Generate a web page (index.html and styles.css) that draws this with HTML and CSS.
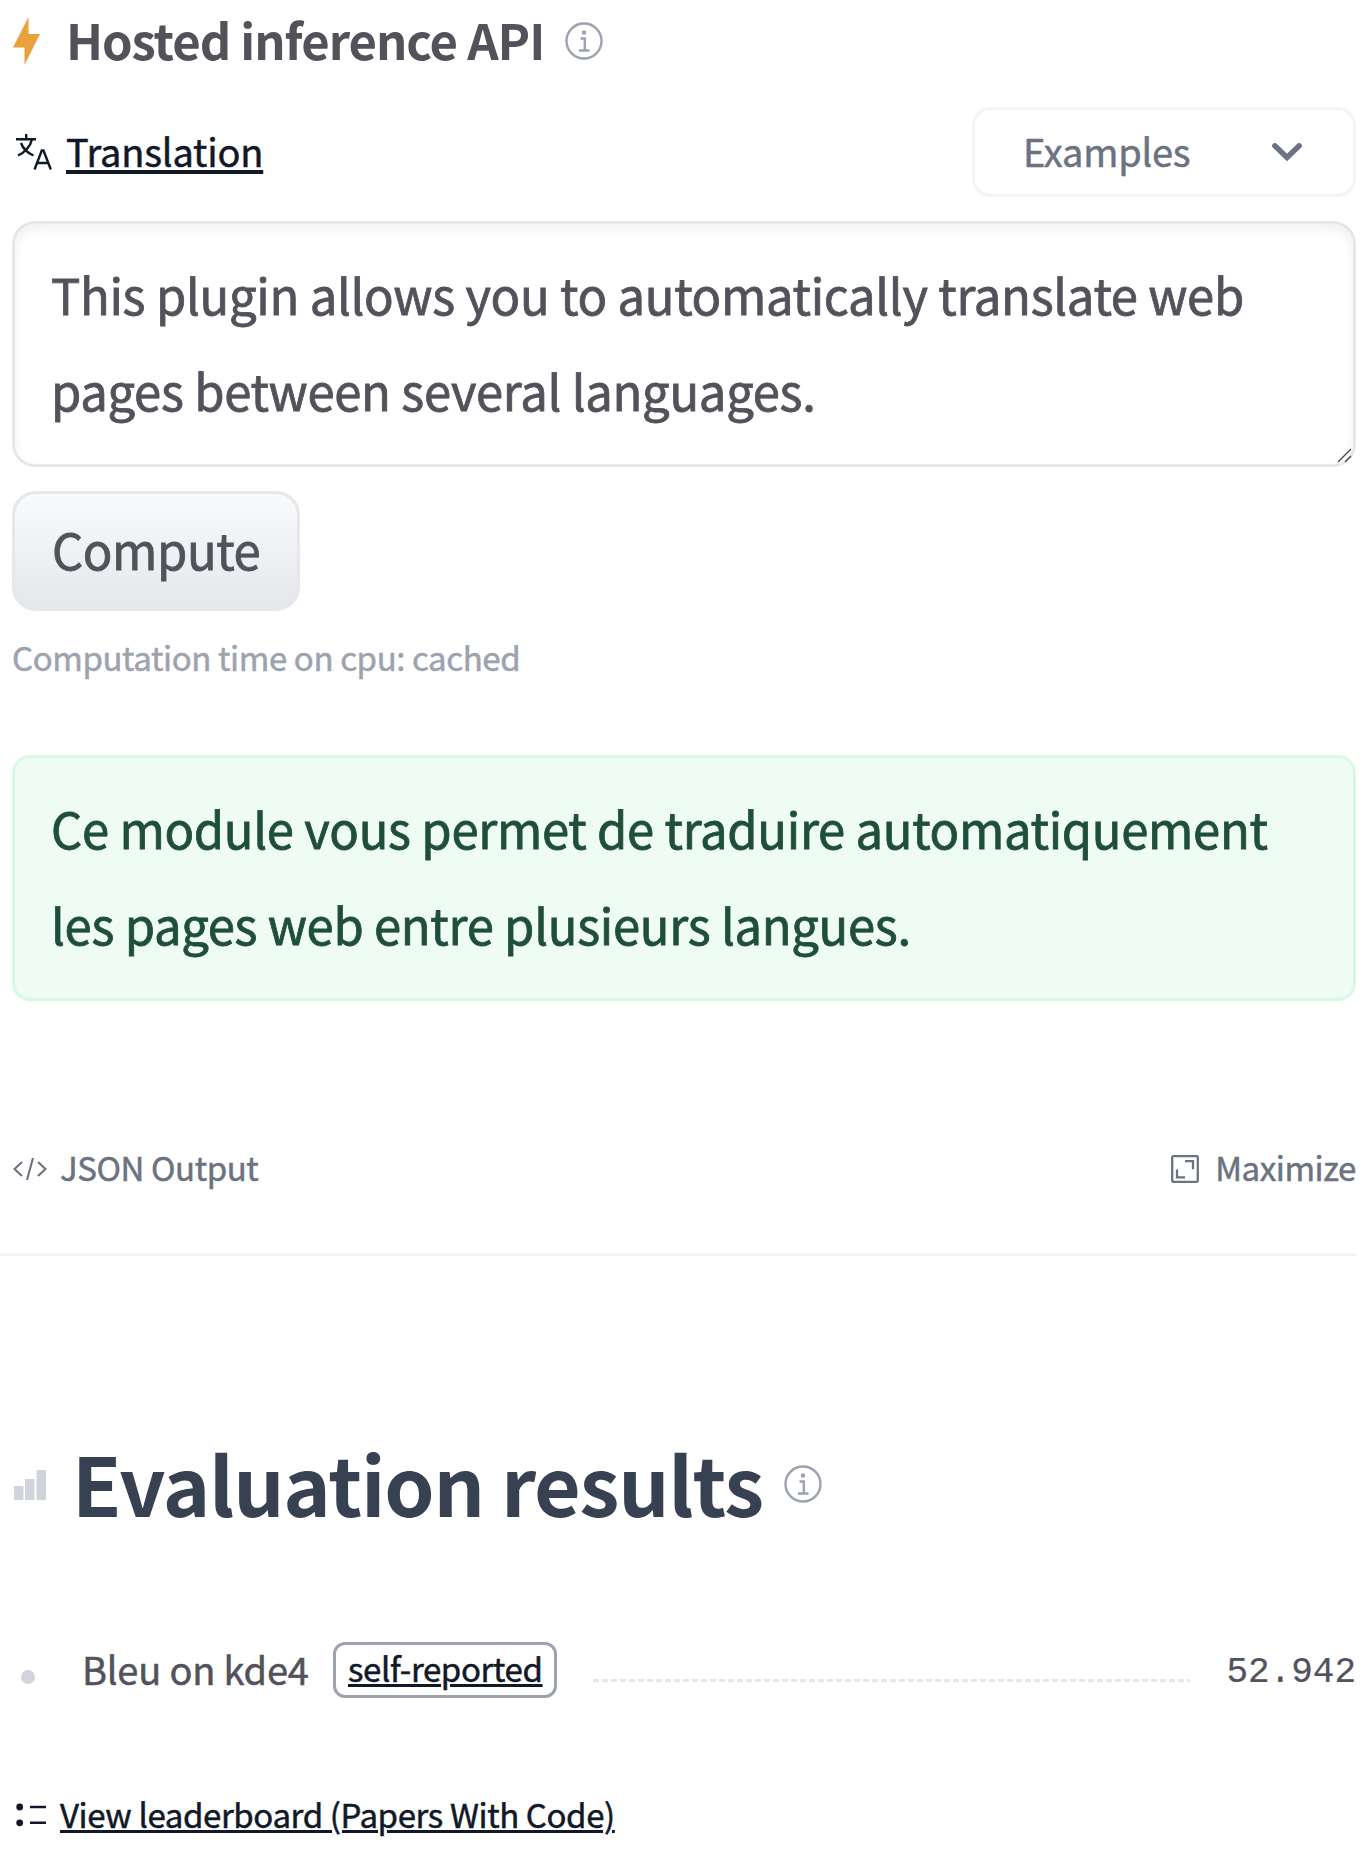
FILE: index.html
```html
<!DOCTYPE html>
<html lang="en">
<head>
<meta charset="utf-8">
<title>Hosted inference API</title>
<link rel="stylesheet" href="styles.css">
</head>
<body>
<main class="page">
  <section class="widget">
    <header class="widget-head">
      <svg class="bolt" viewBox="0 0 27 48"><path d="M15.5 0 0 30.5h11.500L11.500 48 27 17H15.500z" fill="#e9a23b"/></svg>
      <h2 class="title"><span>Hosted inference API</span></h2>
      <svg class="info" viewBox="0 0 38 38" fill="none" stroke="#9ca3af" stroke-width="2.4"><circle cx="19" cy="19" r="17.500"/><path d="M15.500 16.500h4.300v12M14 28.500h10.500"/><circle cx="19" cy="10.500" r="2.200" fill="#9ca3af" stroke="none"/></svg>
    </header>
    <div class="task-row">
      <a class="task" href="#">
        <svg class="translate" viewBox="0 0 36 36" fill="none" stroke="#111827" stroke-width="2.400"><path d="M0 5.200h20M10.200 0v5.200M16 5.200C14.500 12 9 18.500 2 21.500M5 9c2 5.500 6.500 10 12.500 12.500"/><path d="M18.500 35.500 25.800 16.500h1.700l7.300 19M20.800 29h11.700"/></svg>
        <span class="task-name">Translation</span>
      </a>
      <button class="examples"><span class="examples-label">Examples</span>
        <svg class="chevron" viewBox="0 0 30 18" fill="none" stroke="#6b7280" stroke-width="5.400" stroke-linecap="round"><path d="M2.800 2.800 15 14.500 27.200 2.800" stroke-linejoin="miter"/></svg>
      </button>
    </div>
    <div class="input-wrap">
      <textarea class="input" rows="2" spellcheck="false">This plugin allows you to automatically translate web pages between several languages.</textarea>
      <svg class="grip" viewBox="0 0 15 15" stroke="#444" stroke-width="1.300"><path d="M1 14 14 1M8 14l6-6"/></svg>
    </div>
    <button class="compute"><span class="compute-label">Compute</span></button>
    <p class="timing"><span>Computation time on cpu: cached</span></p>
    <div class="output"><span class="out-text">Ce module vous permet de traduire automatiquement<br>les pages web entre plusieurs langues.</span></div>
    <footer class="tools">
      <a class="tool"><svg class="code" viewBox="0 0 34 22" fill="none" stroke="#6b7280" stroke-width="2.100"><path d="M9 4 1.500 11 9 18M25 4l7.500 7L25 18M20 0l-6 22"/></svg><span class="json">JSON Output</span></a>
      <a class="tool"><svg class="max" viewBox="0 0 28 28" fill="none" stroke="#6b7280" stroke-width="2.300"><rect x="1.200" y="1.200" width="25.600" height="25.600" rx="1"/><path d="M14 6.200h8v8M6 14.500v7.800h8"/></svg><span class="maximize">Maximize</span></a>
    </footer>
  </section>
  <section class="results">
    <header class="results-head">
      <svg class="bars" viewBox="0 0 32 30" fill="#d1d5db"><path d="M0 16h9.500v14H0zM11 9h9.500v21H11zM22.500 0H32v30h-9.500z"/></svg>
      <h2 class="results-title"><span>Evaluation results</span></h2>
      <svg class="info" viewBox="0 0 38 38" fill="none" stroke="#9ca3af" stroke-width="2.400"><circle cx="19" cy="19" r="17.500"/><path d="M15.500 16.500h4.300v12M14 28.500h10.500"/><circle cx="19" cy="10.500" r="2.200" fill="#9ca3af" stroke="none"/></svg>
    </header>
    <div class="metric">
      <span class="dot"></span>
      <span class="metric-name">Bleu on kde4</span>
      <a class="badge" href="#"><span class="badge-label">self-reported</span></a>
      <span class="leader"></span>
      <span class="value">52.942</span>
    </div>
    <a class="board" href="#">
      <svg class="list" viewBox="0 0 30 24" fill="#111827"><circle cx="3.700" cy="4" r="3.400"/><circle cx="3.700" cy="19.800" r="3.400"/><path d="M14 2.800h16v2.400H14zM14 18.500h16v2.400H14z"/></svg>
      <span class="board-label">View leaderboard (Papers With Code)</span>
    </a>
  </section>
</main>
</body>
</html>
```
FILE: styles.css
```css
* { box-sizing: border-box; }
body { margin: 0; background: #fff; color: #52525b; font-family: "Noto Sans CJK JP", "Noto Sans", sans-serif; -webkit-text-stroke: .5px; }
button, textarea { font: inherit; color: inherit; }
svg { flex: none; display: block; }
a { color: #111827; white-space: nowrap; }
.page { width: 1356px; height: 1852px; overflow: hidden; }
.widget { height: 1256px; padding-left: 12px; border-bottom: 3px solid #f3f4f6; }
.widget-head { display: flex; align-items: center; height: 76px; padding-top: 6px; }
.bolt { width: 27px; height: 48px; margin-left: 1px; }
.title { width: 499px; margin: -4px 0 0 26px; font-size: 49px; line-height: 76px; font-weight: 700; letter-spacing: -1.02px; white-space: nowrap; -webkit-text-stroke: 0; }
.info { width: 38px; height: 38px; }
.task-row { display: flex; justify-content: space-between; align-items: center; height: 90px; margin-top: 31px; }
.task { display: flex; align-items: center; text-decoration: none; }
.translate { width: 36px; height: 36px; margin: 0 14px 0 4px; }
.task-name { font-size: 38px; line-height: 60px; letter-spacing: -.2px; margin-top: -3px; text-decoration: underline; text-decoration-thickness: 4px; text-underline-offset: 3px; }
.examples { display: flex; align-items: center; justify-content: space-between; width: 384px; height: 90px; padding: 0 51px 0 48px; border: 3px solid #f3f4f6; border-radius: 18px; background: #fff; color: #6b7280; font-size: 38px; line-height: 60px; }
.examples-label { margin-top: -3px; letter-spacing: -.25px; }
.chevron { width: 30px; height: 18px; }
.input-wrap { position: relative; height: 246px; margin-top: 24px; }
.input { display: block; width: 1344px; height: 246px; padding: 22px 36px 26px; border: 3px solid #e5e7eb; border-radius: 23px; background: #fff; box-shadow: inset 0 6px 12px rgba(0, 0, 0, .06); font-size: 49px; line-height: 96px; letter-spacing: -.32px; resize: none; overflow: hidden; outline: none; -webkit-text-stroke: .8px; }
.grip { position: absolute; right: 4px; bottom: 4px; width: 15px; height: 15px; }
.compute { display: flex; align-items: center; width: 288px; height: 120px; margin-top: 24px; padding: 0 37px; border: 3px solid #e5e7eb; border-radius: 24px; background: linear-gradient(#f9fafb, #e5e7eb); font-size: 49px; line-height: 70px; letter-spacing: -.45px; -webkit-text-stroke: .8px; }
.compute-label { margin-top: -4px; }
.timing { margin: 21px 0 0; font-size: 33px; line-height: 50px; letter-spacing: -.4px; color: #9ca3af; white-space: nowrap; }
.output { height: 246px; margin-top: 73px; padding: 22px 36px 20px; border: 3px solid #d9f9e6; border-radius: 18px; background: #effcf5; color: #1f4e3d; font-size: 49px; line-height: 96px; letter-spacing: -.33px; white-space: nowrap; -webkit-text-stroke: .8px; }
.tools { display: flex; justify-content: space-between; align-items: center; height: 50px; margin-top: 141px; color: #6b7280; font-size: 33px; line-height: 50px; }
.tool { display: flex; align-items: center; color: inherit; letter-spacing: -.42px; }
.code { width: 34px; height: 22px; margin: 3px 13px 0 1px; }
.max { width: 28px; height: 28px; margin: 3px 16px 0 0; }
.results { padding-left: 14px; }
.results-head { display: flex; align-items: center; height: 120px; margin-top: 164px; padding-top: 8px; }
.bars { width: 32px; height: 30px; margin-top: 1px; }
.results-title { width: 712px; margin: -5px 0 0 26px; font-size: 80.500px; line-height: 120px; font-weight: 700; letter-spacing: -1.18px; color: #374151; white-space: nowrap; -webkit-text-stroke: 0; }
.metric { display: flex; align-items: center; height: 56px; margin-top: 102px; }
.dot { width: 14px; height: 14px; margin: 14px 47px 0 7px; border-radius: 50%; background: #d1d5db; }
.metric-name { width: 251px; font-size: 38px; line-height: 56px; letter-spacing: -.2px; margin-top: -2px; white-space: nowrap; }
.badge { display: block; width: 224px; height: 56px; padding-left: 12px; border: 3px solid #9ca3af; border-radius: 12px; font-size: 33px; line-height: 46px; letter-spacing: -.38px; text-decoration-thickness: 3px; text-underline-offset: 2px; }
.leader { flex: 1; height: 3px; margin: 21px 36px 0 36px; background: repeating-linear-gradient(90deg, #e5e7eb 0 6px, transparent 6px 9px); }
.value { margin-top: 6px; font-family: "Liberation Mono", monospace; font-size: 36px; line-height: 50px; -webkit-text-stroke: .2px; }
.board { display: flex; align-items: center; height: 50px; margin-top: 90px; text-decoration: none; }
.list { width: 30px; height: 24px; margin: 4px 14px 0 2px; }
.board-label { margin-top: 2px; font-size: 33px; line-height: 50px; letter-spacing: -.39px; text-decoration: underline; text-decoration-thickness: 3px; text-underline-offset: 2px; }
```
